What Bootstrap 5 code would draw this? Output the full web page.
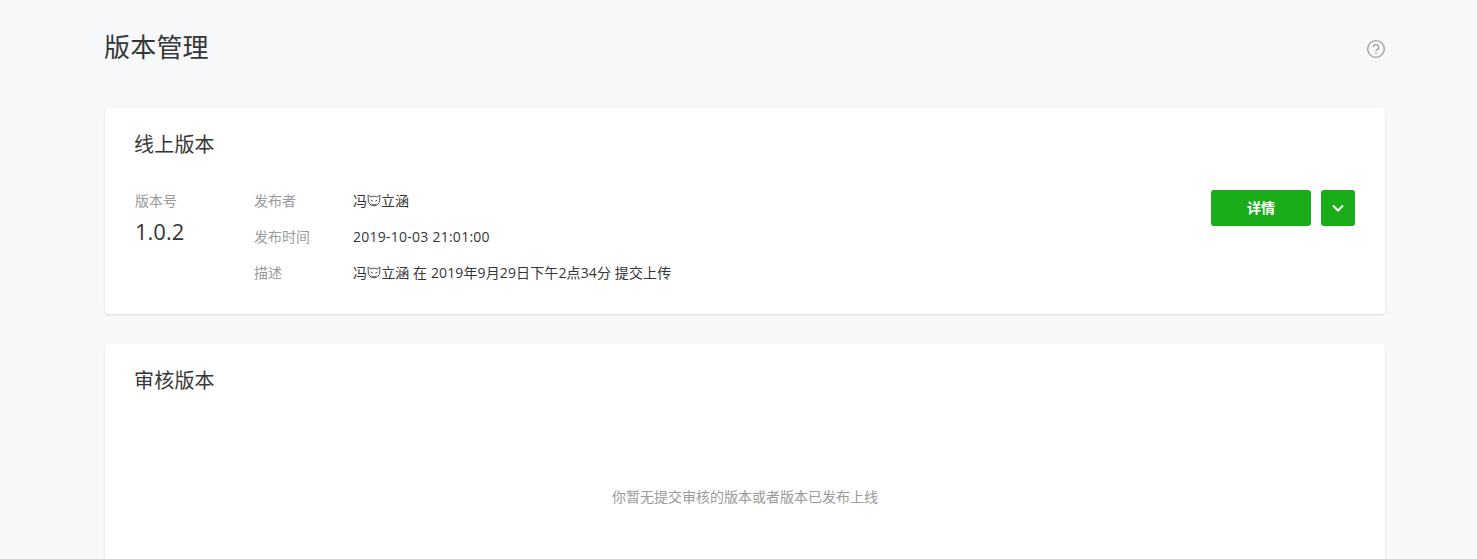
<!DOCTYPE html>
<html lang="zh"><head><meta charset="utf-8">
<link href="https://cdn.jsdelivr.net/npm/bootstrap@5.3.0/dist/css/bootstrap.min.css" rel="stylesheet">
<style>
html,body{height:559px;overflow:hidden}
body{background:#f7f8fa;color:#353535;font-family:"Open Sans","Noto Sans CJK SC",sans-serif;font-size:14px}
.pagewrap{width:1280px;margin-left:105px}
.headrow{height:108px;padding-top:24px}
.pagetitle{font-size:26px;line-height:46px;font-weight:400;margin:0;color:#353535;margin-left:-1px;letter-spacing:.2px}
.helpic{margin-top:16px;display:block}
.panelbox{background:#fff;border-radius:4px;box-shadow:0 1px 2px rgba(150,150,150,.3);padding:21px 30px 27px;margin-bottom:30px}
.paneltitle{font-size:20px;line-height:32px;font-weight:400;margin:0 0 30px -1px;color:#353535;letter-spacing:.2px}
.vercol{width:119px}
.verlabel,.metalabel{color:#9a9a9a;font-size:14px;line-height:20px}
.vernum{font-size:22px;line-height:32px;margin-top:4px;color:#353535}
.metagrid{display:grid;grid-template-columns:99px auto;row-gap:16px;line-height:20px}
.metaval{letter-spacing:.25px}
.metadesc{letter-spacing:.12px}
.emo{vertical-align:-3px}
.btnrow{gap:10px;margin-top:-1px}
.btn-wx{background:#1aad19;color:#fff;font-size:14px;font-weight:700;border:0;border-radius:3px;height:36px;width:100px;line-height:36px;padding:0}
.btn-wx:hover{background:#179b16;color:#fff}
.btn-arrow{width:34px;display:flex;align-items:center;justify-content:center}
.emptytext{color:#9a9a9a;text-align:center;margin-top:90px;margin-bottom:60px;line-height:20px}
</style></head>
<body>
<div class="pagewrap">
 <div class="headrow d-flex justify-content-between align-items-start">
  <h1 class="pagetitle">版本管理</h1>
  <svg class="helpic" width="18" height="18" viewBox="0 0 18 18" fill="none" stroke="#9c9c9c"><circle cx="9" cy="9" r="8.3" stroke-width="1.3"/><path d="M6.400 7.200a2.600 2.600 0 1 1 3.800 2.300c-.8.400-1.200.8-1.200 1.700" stroke-width="1.300"/><circle cx="9" cy="13.400" r=".8" fill="#9c9c9c" stroke="none"/></svg>
 </div>
 <section class="panelbox">
  <h2 class="paneltitle">线上版本</h2>
  <div class="d-flex align-items-start pb-1">
   <div class="vercol"><div class="verlabel">版本号</div><div class="vernum">1.0.2</div></div>
   <div class="metagrid flex-grow-1">
    <div class="metalabel">发布者</div><div>冯<svg class="emo" width="14" height="15" viewBox="0 0 14 15" fill="none" stroke="#555"><path d="M1 1 3.800 3a6.500 6.500 0 0 1 6.400 0L13 1l-.3 5.200A5.700 5.700 0 1 1 1.300 6.200z"/><path d="M3.500 6l2.300 1.200M10.500 6 8.200 7.200M4.500 10q2.500 1.800 5 0"/></svg>立涵</div>
    <div class="metalabel">发布时间</div><div class="metaval">2019-10-03 21:01:00</div>
    <div class="metalabel">描述</div><div class="metadesc">冯<svg class="emo" width="14" height="15" viewBox="0 0 14 15" fill="none" stroke="#555"><path d="M1 1 3.800 3a6.500 6.500 0 0 1 6.400 0L13 1l-.3 5.200A5.700 5.700 0 1 1 1.300 6.200z"/><path d="M3.500 6l2.300 1.200M10.500 6 8.200 7.200M4.500 10q2.500 1.800 5 0"/></svg>立涵 在 2019年9月29日下午2点34分 提交上传</div>
   </div>
   <div class="d-flex btnrow">
    <button class="btn btn-wx">详情</button>
    <button class="btn btn-wx btn-arrow" aria-label="更多"><svg width="12" height="8" viewBox="0 0 12 8" fill="none" stroke="#fff" stroke-width="2"><path d="M1 1.500l5 5 5-5"/></svg></button>
   </div>
  </div>
 </section>
 <section class="panelbox">
  <h2 class="paneltitle">审核版本</h2>
  <div class="emptytext">你暂无提交审核的版本或者版本已发布上线</div>
 </section>
</div>
</body></html>
